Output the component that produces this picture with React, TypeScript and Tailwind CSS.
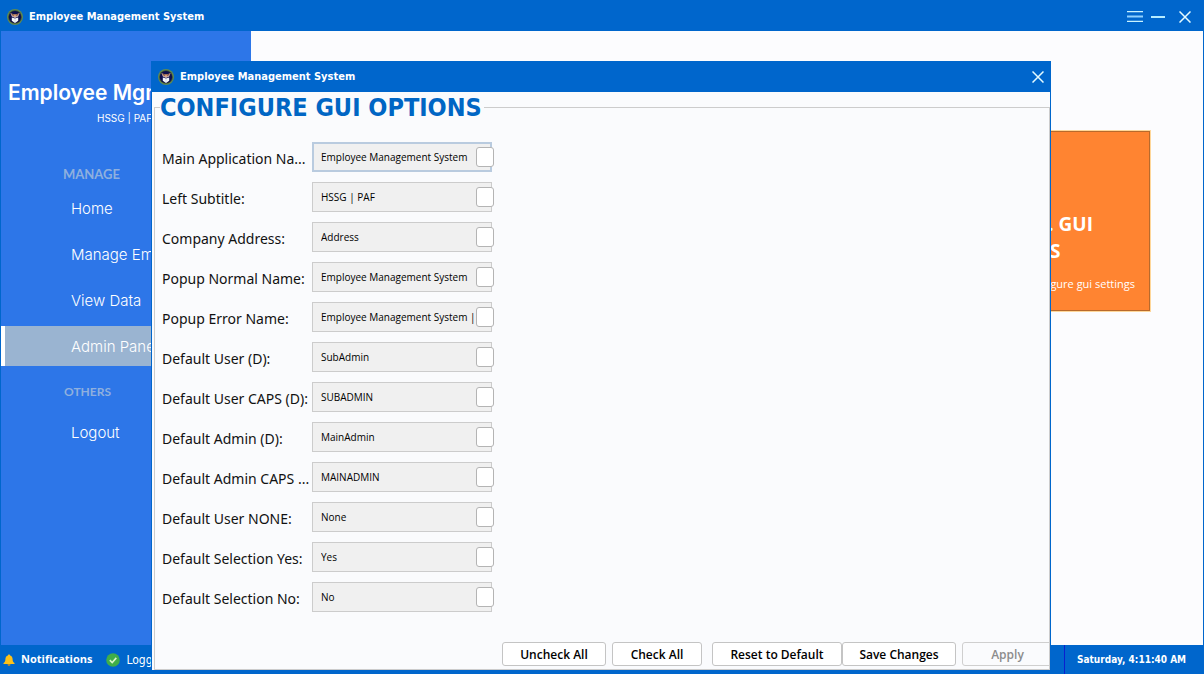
import React from "react";

const FIELDS = [
  { id: "app-name", label: "Main Application Na...", value: "Employee Management System", focused: true },
  { id: "subtitle", label: "Left Subtitle:", value: "HSSG | PAF" },
  { id: "address", label: "Company Address:", value: "Address" },
  { id: "popup-normal", label: "Popup Normal Name:", value: "Employee Management System" },
  { id: "popup-error", label: "Popup Error Name:", value: "Employee Management System | Error" },
  { id: "user", label: "Default User (D):", value: "SubAdmin" },
  { id: "user-caps", label: "Default User CAPS (D):", value: "SUBADMIN" },
  { id: "admin", label: "Default Admin (D):", value: "MainAdmin" },
  { id: "admin-caps", label: "Default Admin CAPS ...", value: "MAINADMIN" },
  { id: "user-none", label: "Default User NONE:", value: "None" },
  { id: "select-yes", label: "Default Selection Yes:", value: "Yes" },
  { id: "select-no", label: "Default Selection No:", value: "No" },
];

const MANAGE = [
  { label: "Home", active: false },
  { label: "Manage Employees", active: false },
  { label: "View Data", active: false },
  { label: "Admin Panel", active: true },
];

function Logo() {
  return (
    <svg viewBox="0 0 16 16" className="size-4 shrink-0" aria-hidden="true">
      <circle cx="8" cy="8" r="8" fill="#5f8a52" />
      <circle cx="8" cy="8" r="6.8" fill="#3c4a35" />
      <circle cx="8" cy="8" r="6.1" fill="#0d0f4c" />
      <path d="M3.4 4 7 5.400h2L12.600 4 11.200 7.600 8 9 4.800 7.600z" fill="#cdb3b4" />
      <path d="M3.400 4 7 5.800 6.400 7.400z" fill="#8a5236" />
      <path d="M12.600 4 9 5.800l.6 1.600z" fill="#8a5236" />
      <path d="M7 5.600h2L8 8z" fill="#e08a3c" />
      <path d="M4.800 8.600 8 9.600l3.200-1v3.200L8 14l-3.200-2.200z" fill="#f4f6fa" />
      <path d="M7.700 9.800h.6v3h-.6z" fill="#c3cbdc" />
    </svg>
  );
}

function CloseIcon() {
  return (
    <svg viewBox="0 0 12 12" className="size-3" aria-hidden="true">
      <path d="M0.5 0.5 11.5 11.5M11.5 0.5 0.5 11.5" stroke="#e4fbff" strokeWidth="1.5" fill="none" />
    </svg>
  );
}

function NavItem({ label, active }: { label: string; active: boolean }) {
  return (
    <a
      href="#"
      className={
        active
          ? "flex h-10 items-center border-l-4 border-white bg-[#9ab4d1] pt-0.5 pl-[66px] text-[15px] text-white"
          : "flex h-10 items-center pt-0.5 pl-[70px] text-[15px] text-white"
      }
    >
      {label}
    </a>
  );
}

function Sidebar() {
  return (
    <aside className="w-[250px] shrink-0 bg-[#2d76e8] pt-12 font-[Inter,sans-serif] font-light whitespace-nowrap">
      <h1 className="pl-[7px] text-[21px] leading-7 font-semibold text-white">Employee Mgmt.</h1>
      <p className="pt-[3px] pl-24 text-[10px] leading-4 font-normal text-white">HSSG | PAF</p>
      <h2 className="mt-10 pl-[62px] font-[Lato,sans-serif] text-[13px] leading-4 font-bold text-[#8fb0de]">MANAGE</h2>
      <nav className="mt-1.5 flex flex-col gap-1.5">
        {MANAGE.map((item) => (
          <NavItem key={item.label} label={item.label} active={item.active} />
        ))}
      </nav>
      <h2 className="mt-[18px] pl-[63px] font-[Lato,sans-serif] text-[12px] leading-4 font-bold text-[#8fb0de]">OTHERS</h2>
      <nav className="mt-3">
        <NavItem label="Logout" active={false} />
      </nav>
    </aside>
  );
}

function FieldRow({ id, label, value, focused }: { id: string; label: string; value: string; focused?: boolean }) {
  return (
    <div className="flex h-10 items-center">
      <label htmlFor={id} className="w-[150px] shrink-0 pt-1 font-['Noto_Sans',sans-serif] text-[14px] leading-5 whitespace-nowrap text-[#111111]">
        {label}
      </label>
      <input
        id={id}
        type="text"
        defaultValue={value}
        className={
          focused
            ? "h-[30px] w-[180px] border-2 border-[#b9cbdf] bg-[#f0f0f0] pr-2 pl-[7px] text-[10px] font-medium text-black outline-none"
            : "h-[30px] w-[180px] border border-[#cccccc] bg-[#f0f0f0] pr-2 pl-2 text-[10px] font-medium text-black outline-none"
        }
      />
      <input
        type="checkbox"
        aria-label={`Select ${label}`}
        className="relative -ml-4 h-5 w-[18px] appearance-none rounded-[3px] border border-[#b4b4b4] bg-white"
      />
    </div>
  );
}

const BUTTON = "h-6 shrink-0 rounded-[3px] border border-[#c4c4c4] bg-white pt-0.5 text-[12px] leading-5 font-semibold text-black";

function OptionsDialog() {
  return (
    <section role="dialog" aria-label="Configure GUI options" className="flex w-[900px] flex-col border-x border-[#0066cc] bg-[#fafbfd]">
      <header className="-mx-px flex h-[31px] items-center bg-[#0066cc] px-[7px]">
        <Logo />
        <span className="grow pt-0.5 pl-1.5 font-['DejaVu_Sans_Condensed','DejaVu_Sans',sans-serif] text-[11px] font-bold text-white">
          Employee Management System
        </span>
        <button type="button" aria-label="Close dialog">
          <CloseIcon />
        </button>
      </header>
      <fieldset className="ml-0.5 min-w-0 overflow-hidden border border-[#cccccc] pb-[3px]">
        <legend className="ml-[5px] h-[30px] pr-0.5 font-['DejaVu_Sans_Condensed','DejaVu_Sans',sans-serif] text-[25px] leading-8 font-bold text-[#0066c4]">
          CONFIGURE GUI OPTIONS
        </legend>
        <div className="pt-[15px] pl-[7px]">
          {FIELDS.map((field) => (
            <FieldRow key={field.id} {...field} />
          ))}
        </div>
        <div className="mt-[25px] -mr-1 flex justify-end">
          <button type="button" className={`${BUTTON} w-[104px]`}>Uncheck All</button>
          <button type="button" className={`${BUTTON} ml-1.5 w-[90px]`}>Check All</button>
          <button type="button" className={`${BUTTON} ml-2.5 w-[130px]`}>Reset to Default</button>
          <button type="button" className={`${BUTTON} w-[114px]`}>Save Changes</button>
          <button type="button" disabled className="ml-1.5 h-6 w-[91px] shrink-0 rounded-[3px] border border-[#cfcfcf] bg-[#fafbfd] pt-0.5 text-[12px] leading-5 font-semibold text-[#8c8c8c]">
            Apply
          </button>
        </div>
      </fieldset>
    </section>
  );
}

export default function App() {
  return (
    <div className="relative flex min-h-screen flex-col overflow-hidden bg-[#0066cc] font-['Open_Sans','Noto_Sans',sans-serif]">
      <header className="flex h-[31px] items-center pt-1 pr-[13px] pb-0.5 pl-[7px]">
        <Logo />
        <span className="grow pt-0.5 pl-1.5 font-['DejaVu_Sans_Condensed','DejaVu_Sans',sans-serif] text-[11px] font-bold text-white">
          Employee Management System
        </span>
        <div className="flex items-center">
          <button type="button" aria-label="Menu">
            <svg viewBox="0 0 16 11" className="h-[11px] w-4" aria-hidden="true">
              <path d="M0 .5h16M0 10.5h16" stroke="#c9f3ff" strokeWidth="1.4" />
              <path d="M0 5.500h16" stroke="#8fd0ff" strokeWidth="2" />
            </svg>
          </button>
          <button type="button" aria-label="Minimize" className="ml-2">
            <svg viewBox="0 0 14 2" className="h-0.5 w-3.5" aria-hidden="true">
              <path d="M0 1h14" stroke="#b5ecff" strokeWidth="2" />
            </svg>
          </button>
          <button type="button" aria-label="Close window" className="ml-3.5">
            <CloseIcon />
          </button>
        </div>
      </header>

      <div className="mx-px flex grow">
        <Sidebar />
        <main className="flex grow items-start justify-end bg-[#fcfcfe] pt-[100px] pr-[53px]">
          <article className="flex h-[180px] w-[180px] flex-col border border-[#b86a2c] bg-[#ff8431] pt-[79px] pr-3.5 pl-1 text-white outline outline-[#ffd79a]">
            <h2 className="text-[19px] leading-[27px] font-bold">CONFIG. GUI OPTIONS</h2>
            <p className="mt-[11px] text-right text-[11px] leading-4 whitespace-nowrap">Click to configure gui settings</p>
          </article>
        </main>
      </div>

      <footer className="flex h-[29px] items-center text-[12px] text-white">
        <svg viewBox="0 0 12 12" className="ml-[3px] size-3" aria-hidden="true">
          <path d="M6 0.4c.7 0 1.1.5 1.1 1.1C8.900 2 9.600 3.500 9.600 5.200c0 2.200.8 3 1.900 3.900v.8H.5v-.8C1.600 8.200 2.400 7.400 2.400 5.200c0-1.700.7-3.200 2.500-3.700C4.900.9 5.300.4 6 .4z" fill="#fcc21b" />
          <path d="M4.500 10.300h3a1.500 1.500 0 0 1-3 0z" fill="#e59600" />
        </svg>
        <button type="button" className="pl-1.5 text-[11px] font-bold">Notifications</button>
        <svg viewBox="0 0 14 14" className="ml-3.5 size-3.5" aria-hidden="true">
          <circle cx="7" cy="7" r="6.800" fill="#3fae49" />
          <path d="M3.800 7.200 6.200 9.500 10.300 4.900" stroke="#d9f5c9" strokeWidth="1.600" fill="none" />
        </svg>
        <span className="grow pl-1.5 font-['DejaVu_Sans_Condensed','DejaVu_Sans',sans-serif]">Logged in</span>
        <time className="flex h-full w-[140px] items-center border-l border-[#0a1fd0] pl-3 font-['DejaVu_Sans_Condensed','DejaVu_Sans',sans-serif] text-[10px] font-bold">
          Saturday, 4:11:40 AM
        </time>
      </footer>

      <div className="absolute inset-0 flex items-start justify-center pt-[61px] pr-0.5">
        <OptionsDialog />
      </div>
    </div>
  );
}
